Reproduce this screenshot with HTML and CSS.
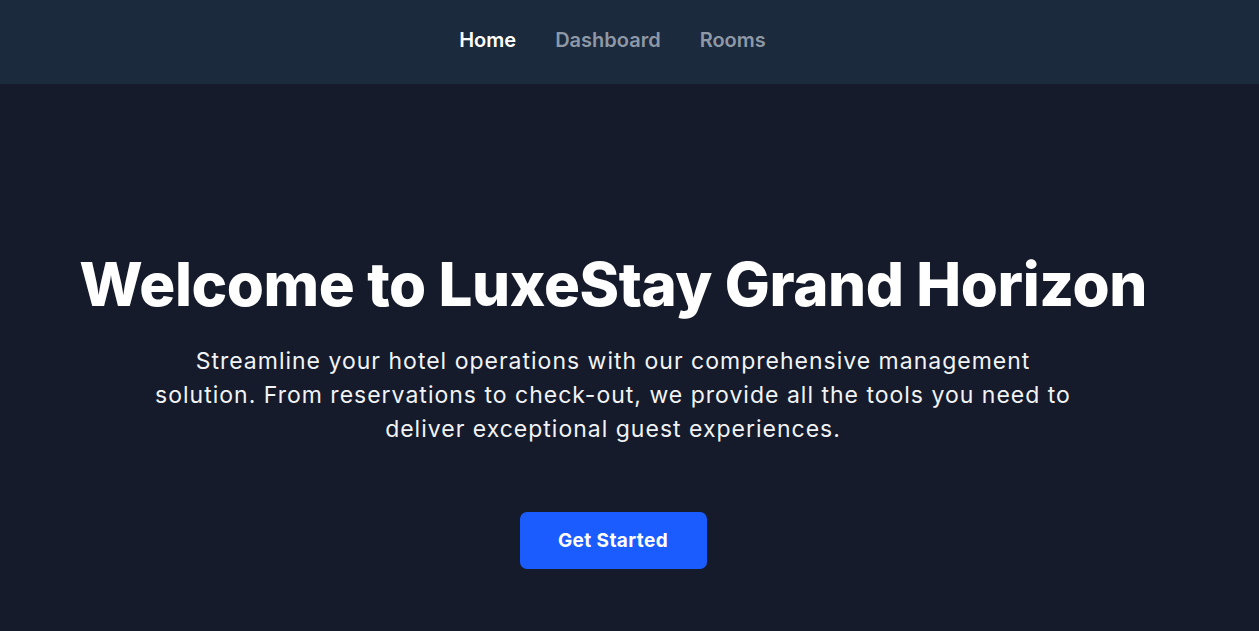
FILE: index.html
```html
<!DOCTYPE html>
<html lang="en">
<head>
<meta charset="utf-8">
<title>LuxeStay Grand Horizon</title>
<link rel="stylesheet" href="styles.css">
</head>
<body>
<header class="topbar">
  <nav class="nav">
    <a class="nav-link active" href="#">Home</a>
    <a class="nav-link" href="#">Dashboard</a>
    <a class="nav-link" href="#">Rooms</a>
  </nav>
</header>
<main class="hero">
  <h1 class="hero-title">Welcome to LuxeStay Grand Horizon</h1>
  <p class="hero-text">Streamline your hotel operations with our comprehensive management solution. From reservations to check-out, we provide all the tools you need to deliver exceptional guest experiences.</p>
  <a class="btn" href="#">Get Started</a>
</main>
</body>
</html>
```

FILE: styles.css
```css
* { box-sizing: border-box; }
html, body { margin: 0; height: 100%; }
body {
  background: #151b2b;
  font-family: Inter, "Noto Sans", sans-serif;
  color: #fff;
  overflow: hidden;
}
.topbar {
  height: 84px;
  background: #1b2a3c;
  display: flex;
  align-items: center;
  justify-content: center;
}
.nav {
  display: flex;
  gap: 39px;
  margin-left: -34px;
  margin-top: -5px;
}
.nav-link {
  font-size: 20px;
  font-weight: 600;
  color: #8e98a6;
  text-decoration: none;
}
.nav-link.active { color: #fff; }
.hero {
  display: flex;
  flex-direction: column;
  align-items: center;
  text-align: center;
  padding-top: 162px;
}
.hero-title {
  margin: 0;
  font-size: 60px;
  font-weight: 800;
  line-height: 76px;
  letter-spacing: -0.4px;
  margin-left: -33px;
}
.hero-text {
  margin: 22px 0 0;
  max-width: 930px;
  font-size: 23px;
  line-height: 34px;
  font-weight: 400;
  letter-spacing: 1px;
  color: #f1f3f6;
  margin-left: -33px;
}
.btn {
  margin-top: 66px;
  margin-left: -33px;
  width: 187px;
  height: 57px;
  display: flex;
  align-items: center;
  justify-content: center;
  background: #1a5cff;
  border-radius: 7px;
  color: #fff;
  font-size: 19px;
  font-weight: 700;
  letter-spacing: 0.4px;
  text-decoration: none;
}
```
